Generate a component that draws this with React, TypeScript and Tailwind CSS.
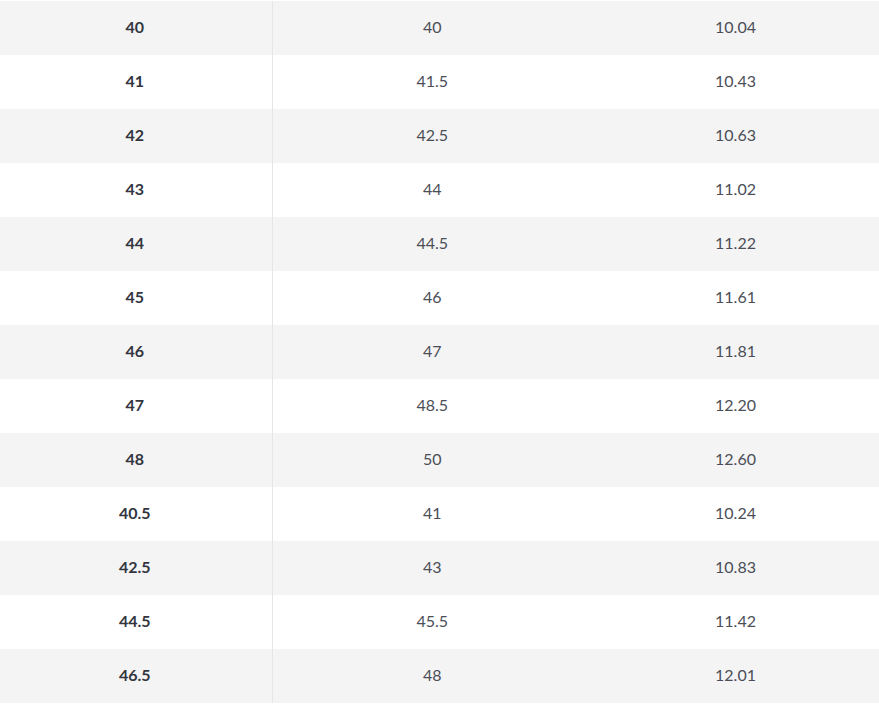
const rows: [string, string, string][] = [
  ["40", "40", "10.04"],
  ["41", "41.5", "10.43"],
  ["42", "42.5", "10.63"],
  ["43", "44", "11.02"],
  ["44", "44.5", "11.22"],
  ["45", "46", "11.61"],
  ["46", "47", "11.81"],
  ["47", "48.5", "12.20"],
  ["48", "50", "12.60"],
  ["40.5", "41", "10.24"],
  ["42.5", "43", "10.83"],
  ["44.5", "45.5", "11.42"],
  ["46.5", "48", "12.01"],
];

export default function App() {
  return (
    <div className="w-[879px] bg-white pt-px font-['Lato',sans-serif] text-[16px]">
      <table className="w-full table-fixed border-collapse">
        <colgroup>
          <col className="w-[272px]" />
          <col className="w-[320px]" />
          <col />
        </colgroup>
        <tbody>
          {rows.map((r, i) => (
            <tr key={i} className={i % 2 === 0 ? "h-[54px] bg-[#f4f4f4]" : "h-[54px] bg-white"}>
              <td className="border-r border-[#e6e6e6] pb-[3px] pr-[2px] text-center font-bold text-[#33363f]">{r[0]}</td>
              <td className="pb-[3px] text-center text-[#4b4e57]">{r[1]}</td>
              <td className="pb-[3px] text-center text-[#4b4e57]">{r[2]}</td>
            </tr>
          ))}
        </tbody>
      </table>
    </div>
  );
}
